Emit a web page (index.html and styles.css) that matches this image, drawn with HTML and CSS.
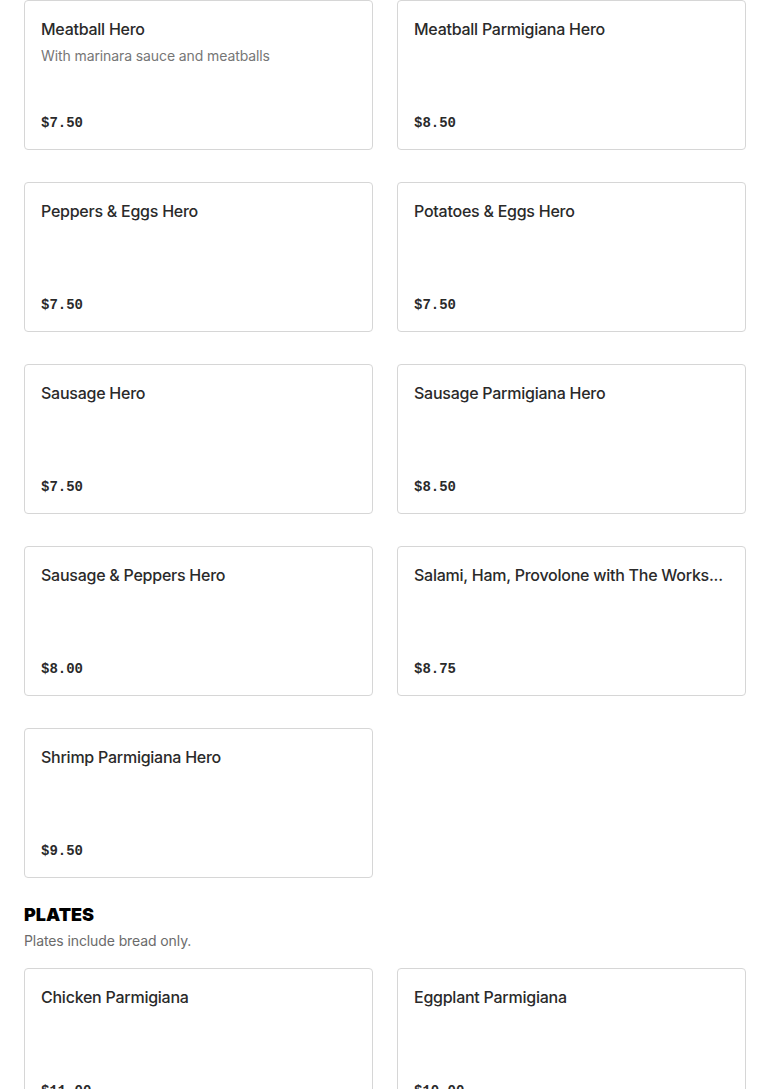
FILE: index.html
```html
<!DOCTYPE html>
<html>
<head>
<meta charset="utf-8">
<link rel="stylesheet" href="styles.css">
</head>
<body>
<div class="page">
  <div class="grid">
    <div class="card"><div><div class="title">Meatball Hero</div><div class="desc">With marinara sauce and meatballs</div></div><div class="price">$7.50</div></div>
    <div class="card"><div><div class="title">Meatball Parmigiana Hero</div></div><div class="price">$8.50</div></div>
    <div class="card"><div><div class="title">Peppers &amp; Eggs Hero</div></div><div class="price">$7.50</div></div>
    <div class="card"><div><div class="title">Potatoes &amp; Eggs Hero</div></div><div class="price">$7.50</div></div>
    <div class="card"><div><div class="title">Sausage Hero</div></div><div class="price">$7.50</div></div>
    <div class="card"><div><div class="title">Sausage Parmigiana Hero</div></div><div class="price">$8.50</div></div>
    <div class="card"><div><div class="title">Sausage &amp; Peppers Hero</div></div><div class="price">$8.00</div></div>
    <div class="card"><div><div class="title">Salami, Ham, Provolone with The Works...</div></div><div class="price">$8.75</div></div>
    <div class="card"><div><div class="title">Shrimp Parmigiana Hero</div></div><div class="price">$9.50</div></div>
  </div>
  <section class="section">
    <h2 class="section-title">PLATES</h2>
    <p class="section-sub">Plates include bread only.</p>
    <div class="grid">
      <div class="card"><div><div class="title">Chicken Parmigiana</div></div><div class="price">$11.00</div></div>
      <div class="card"><div><div class="title">Eggplant Parmigiana</div></div><div class="price">$10.00</div></div>
    </div>
  </section>
</div>
</body>
</html>
```

FILE: styles.css
```css
html, body {
  margin: 0;
  padding: 0;
  background: #fff;
}
body {
  font-family: Inter, "Noto Sans", "Liberation Sans", sans-serif;
  color: #2a2a2a;
}
.page {
  padding: 0 24px;
}
.grid {
  display: grid;
  grid-template-columns: 1fr 1fr;
  column-gap: 24px;
  row-gap: 32px;
}
.card {
  box-sizing: border-box;
  min-height: 150px;
  border: 1px solid #d6d6d6;
  border-radius: 4px;
  padding: 16px;
  display: flex;
  flex-direction: column;
  justify-content: space-between;
  background: #fff;
}
.title {
  font-size: 16px;
  line-height: 24px;
  font-weight: 500;
  color: #2a2a2a;
  white-space: nowrap;
  overflow: hidden;
  text-overflow: ellipsis;
  letter-spacing: -0.25px;
}
.desc {
  margin-top: 5px;
  font-size: 14px;
  line-height: 20px;
  color: #767676;
  letter-spacing: -0.1px;
}
.price {
  font-family: "Liberation Mono", "DejaVu Sans Mono", monospace;
  font-weight: 700;
  font-size: 14px;
  line-height: 20px;
  color: #2a2a2a;
}
.section {
  margin-top: 25px;
}
.section-title {
  margin: 0;
  font-size: 18px;
  line-height: 24px;
  font-weight: 900;
  color: #000;
  letter-spacing: 0;
}
.section-sub {
  margin: 4px 0 17px;
  font-size: 14px;
  line-height: 20px;
  color: #6b6b6b;
  letter-spacing: -0.1px;
}
```
